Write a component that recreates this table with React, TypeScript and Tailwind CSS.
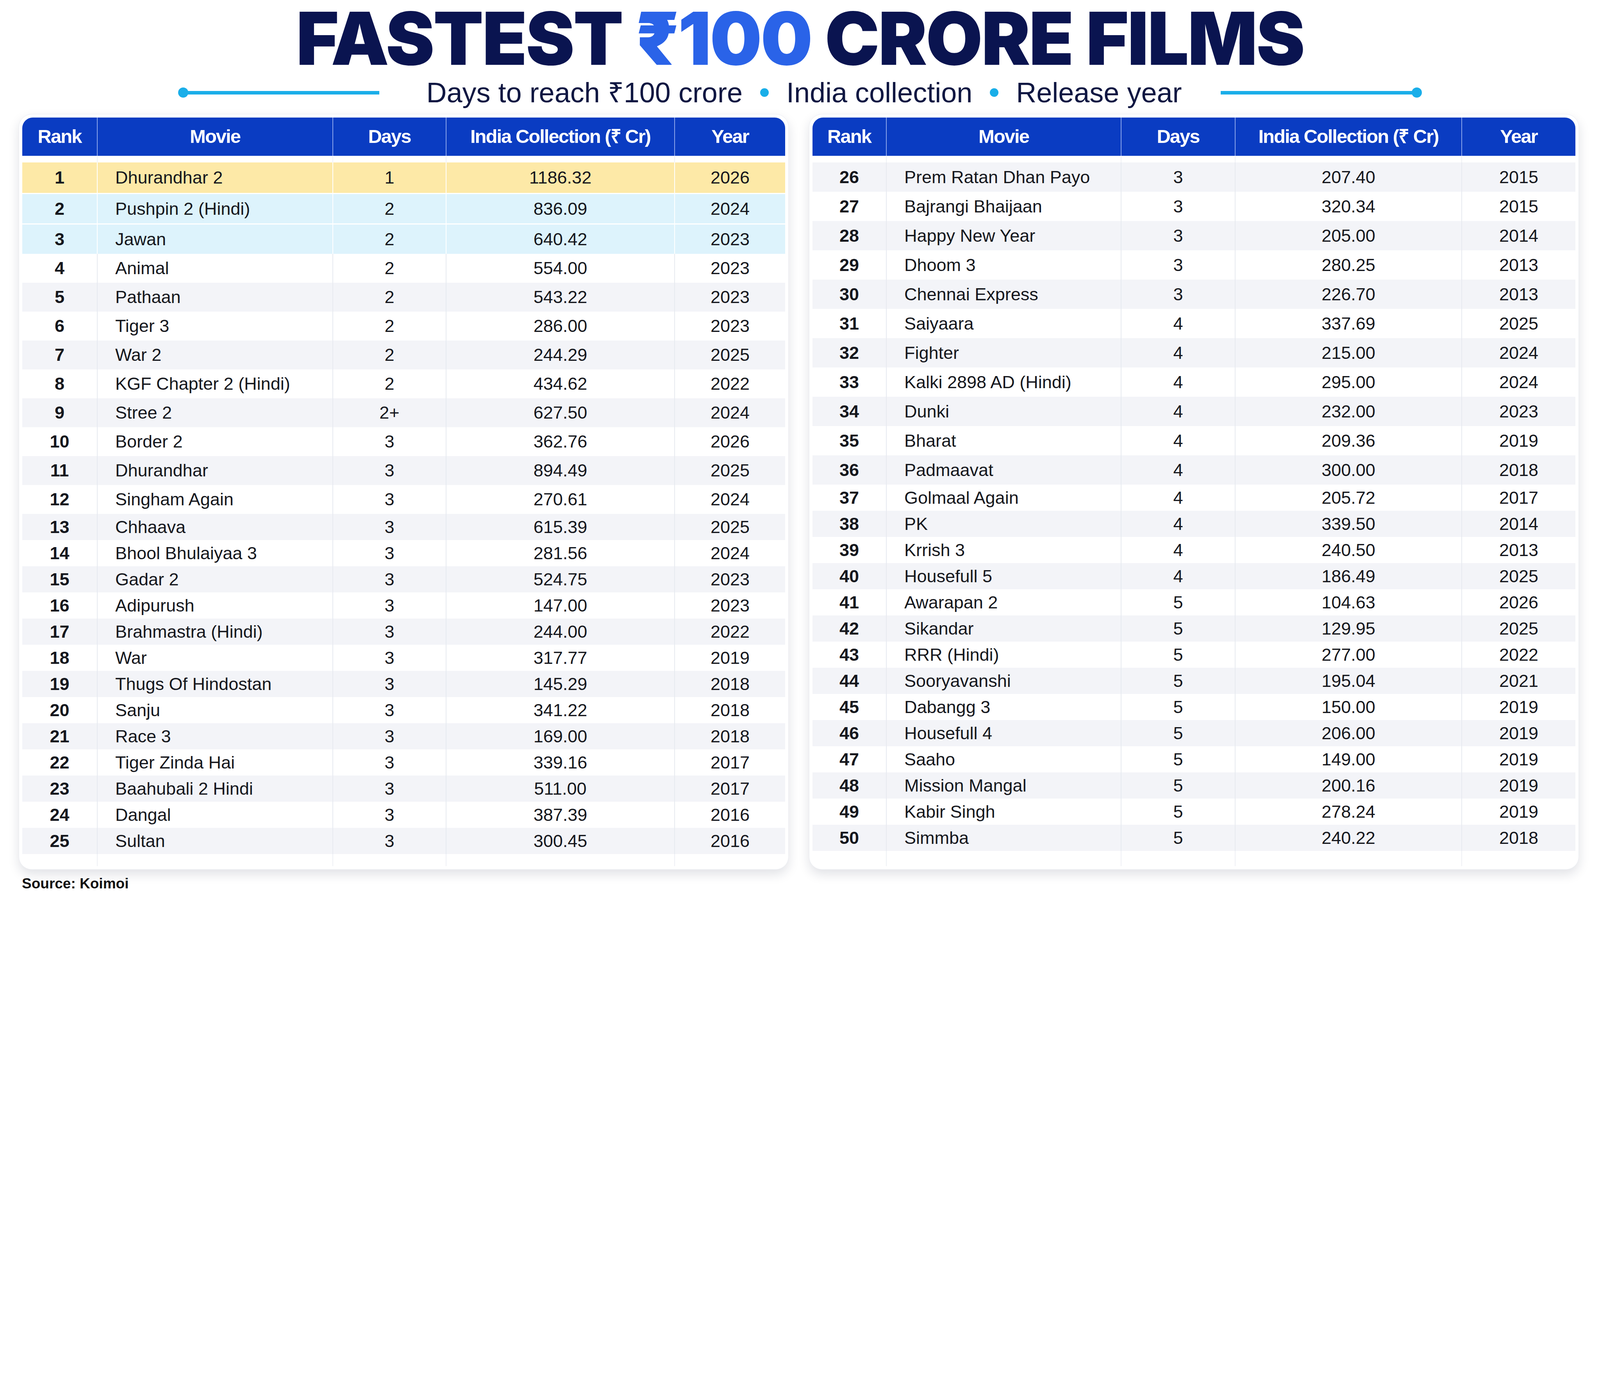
import React from "react";

type Film = [number, string, string, string, number];

const LEFT: Film[] = [
  [1, "Dhurandhar 2", "1", "1186.32", 2026],
  [2, "Pushpin 2 (Hindi)", "2", "836.09", 2024],
  [3, "Jawan", "2", "640.42", 2023],
  [4, "Animal", "2", "554.00", 2023],
  [5, "Pathaan", "2", "543.22", 2023],
  [6, "Tiger 3", "2", "286.00", 2023],
  [7, "War 2", "2", "244.29", 2025],
  [8, "KGF Chapter 2 (Hindi)", "2", "434.62", 2022],
  [9, "Stree 2", "2+", "627.50", 2024],
  [10, "Border 2", "3", "362.76", 2026],
  [11, "Dhurandhar", "3", "894.49", 2025],
  [12, "Singham Again", "3", "270.61", 2024],
  [13, "Chhaava", "3", "615.39", 2025],
  [14, "Bhool Bhulaiyaa 3", "3", "281.56", 2024],
  [15, "Gadar 2", "3", "524.75", 2023],
  [16, "Adipurush", "3", "147.00", 2023],
  [17, "Brahmastra (Hindi)", "3", "244.00", 2022],
  [18, "War", "3", "317.77", 2019],
  [19, "Thugs Of Hindostan", "3", "145.29", 2018],
  [20, "Sanju", "3", "341.22", 2018],
  [21, "Race 3", "3", "169.00", 2018],
  [22, "Tiger Zinda Hai", "3", "339.16", 2017],
  [23, "Baahubali 2 Hindi", "3", "511.00", 2017],
  [24, "Dangal", "3", "387.39", 2016],
  [25, "Sultan", "3", "300.45", 2016],
];

const RIGHT: Film[] = [
  [26, "Prem Ratan Dhan Payo", "3", "207.40", 2015],
  [27, "Bajrangi Bhaijaan", "3", "320.34", 2015],
  [28, "Happy New Year", "3", "205.00", 2014],
  [29, "Dhoom 3", "3", "280.25", 2013],
  [30, "Chennai Express", "3", "226.70", 2013],
  [31, "Saiyaara", "4", "337.69", 2025],
  [32, "Fighter", "4", "215.00", 2024],
  [33, "Kalki 2898 AD (Hindi)", "4", "295.00", 2024],
  [34, "Dunki", "4", "232.00", 2023],
  [35, "Bharat", "4", "209.36", 2019],
  [36, "Padmaavat", "4", "300.00", 2018],
  [37, "Golmaal Again", "4", "205.72", 2017],
  [38, "PK", "4", "339.50", 2014],
  [39, "Krrish 3", "4", "240.50", 2013],
  [40, "Housefull 5", "4", "186.49", 2025],
  [41, "Awarapan 2", "5", "104.63", 2026],
  [42, "Sikandar", "5", "129.95", 2025],
  [43, "RRR (Hindi)", "5", "277.00", 2022],
  [44, "Sooryavanshi", "5", "195.04", 2021],
  [45, "Dabangg 3", "5", "150.00", 2019],
  [46, "Housefull 4", "5", "206.00", 2019],
  [47, "Saaho", "5", "149.00", 2019],
  [48, "Mission Mangal", "5", "200.16", 2019],
  [49, "Kabir Singh", "5", "278.24", 2019],
  [50, "Simmba", "5", "240.22", 2018],
];

const HEADERS = ["Rank", "Movie", "Days", "India Collection (₹ Cr)", "Year"];

function rowBg(rank: number, side: "left" | "right") {
  if (rank === 1) return "bg-[#fde9a7]";
  if (rank === 2 || rank === 3) return "bg-[#ddf3fc]";
  const grey = side === "left" ? rank % 2 === 1 : rank % 2 === 0;
  return grey ? "bg-[#f3f4f8]" : "bg-white";
}

// rows get shorter further down the list, as in the poster
function rowHeight(rank: number, side: "left" | "right") {
  if (side === "left") {
    if (rank <= 3) return "h-[78px]";
    if (rank <= 12) return "h-[74px]";
    return "h-[67px]";
  }
  if (rank <= 36) return "h-[75px]";
  return "h-[67px]";
}

function Table({ rows, side, cols }: { rows: Film[]; side: "left" | "right"; cols: string }) {
  return (
    <div className="flex h-[1935px] w-[1971px] flex-col rounded-[33px] border border-[#eceef3] bg-white p-[8px] shadow-[0_12px_28px_rgba(20,30,60,0.13)]">
      <div className={`grid h-[98px] ${cols} rounded-t-[27px] bg-[#0a3cc2] text-[49px] font-bold tracking-[-2px] text-white`}>
        {HEADERS.map((h, i) => (
          <div
            key={h}
            className={`flex items-center justify-center ${i > 0 ? "border-l-2 border-[#8aa4ea]" : ""}`}
          >
            {h}
          </div>
        ))}
      </div>
      <div className={`grid h-[17px] ${cols}`}>
        {HEADERS.map((h, i) => (
          <div key={h} className={i > 0 ? "border-l-2 border-[#eef0f5]" : ""} />
        ))}
      </div>
      {rows.map(([rank, movie, days, coll, year]) => {
        const hi = rank <= 3;
        const line = hi ? "border-l-2 border-white" : "border-l-2 border-[#e7eaf0]";
        const sep = rank === 2 || rank === 3 ? "border-t-[3px] border-t-white" : "";
        return (
          <div
            key={rank}
            className={`grid ${cols} ${rowHeight(rank, side)} ${rowBg(rank, side)} ${sep} text-[45px] text-[#15171d]`}
          >
            <div className="flex items-center justify-center font-bold">{rank}</div>
            <div className={`flex items-center pl-[45px] ${line}`}>{movie}</div>
            <div className={`flex items-center justify-center ${line}`}>{days}</div>
            <div className={`flex items-center justify-center ${line}`}>{coll}</div>
            <div className={`flex items-center justify-center ${line}`}>{year}</div>
          </div>
        );
      })}
      <div className={`grid flex-1 ${cols}`}>
        {HEADERS.map((h, i) => (
          <div key={h} className={i > 0 ? "border-l-2 border-[#eef0f5]" : ""} />
        ))}
      </div>
    </div>
  );
}

function Rule({ dot }: { dot: "left" | "right" }) {
  return (
    <div className="flex w-[515px] items-center">
      {dot === "left" && <span className="h-[26px] w-[26px] shrink-0 rounded-full bg-[#1aaee9]" />}
      <span className={`h-[9px] flex-1 bg-[#1aaee9] ${dot === "left" ? "-ml-[5px]" : "-mr-[5px]"}`} />
      {dot === "right" && <span className="h-[26px] w-[26px] shrink-0 rounded-full bg-[#1aaee9]" />}
    </div>
  );
}

function Dot() {
  return <span className="mx-[45px] h-[22px] w-[22px] shrink-0 rounded-full bg-[#19aee8]" />;
}

export default function App() {
  return (
    <div className="relative h-[2304px] w-[4096px] overflow-hidden bg-white font-['Liberation_Sans',Arial,sans-serif]">
      <h1 className="pt-[5px] text-center font-['Inter',sans-serif] text-[187px] font-black leading-none tracking-[-3px] text-[#0a1450]">
        FASTEST <span className="text-[#2a63e8]">₹100</span> CRORE FILMS
      </h1>
      <div className="mt-[9px] flex h-[72px] items-center justify-center text-[72px] leading-none text-[#0f1742]">
        <Rule dot="left" />
        <span className="ml-[121px]">Days to reach ₹100 crore</span>
        <Dot />
        <span>India collection</span>
        <Dot />
        <span className="mr-[100px]">Release year</span>
        <Rule dot="right" />
      </div>
      <div className="mt-[19px] flex gap-[52px] px-[48px]">
        <Table rows={LEFT} side="left" cols="grid-cols-[191px_603px_290px_585px_284px]" />
        <Table rows={RIGHT} side="right" cols="grid-cols-[188px_601px_292px_580px_292px]" />
      </div>
      <p className="mt-[17px] pl-[56px] text-[37px] font-bold leading-none text-[#111]">Source: Koimoi</p>
    </div>
  );
}
